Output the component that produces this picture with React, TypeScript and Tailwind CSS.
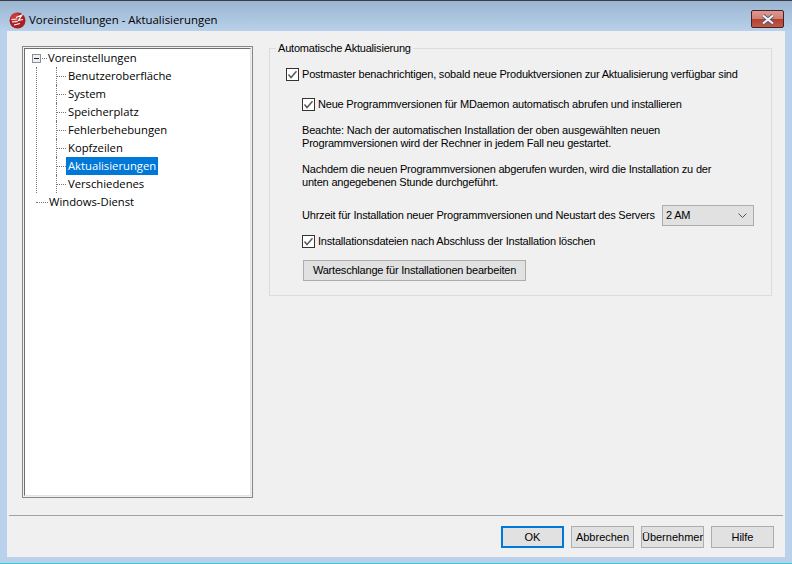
const treeItems = [
  "Benutzeroberfläche",
  "System",
  "Speicherplatz",
  "Fehlerbehebungen",
  "Kopfzeilen",
  "Aktualisierungen",
  "Verschiedenes",
];

const Checkbox = ({ className = "" }: { className?: string }) => (
  <svg width="13" height="13" viewBox="0 0 13 13" className={`shrink-0 ${className}`}>
    <rect x="0.5" y="0.5" width="12" height="12" fill="#fff" stroke="#333" />
    <path d="M2.5 6.5 L5 9.5 L10.5 3.2" fill="none" stroke="#5a5a5a" strokeWidth="1.5" />
  </svg>
);

const AppLogo = () => (
  <svg width="17" height="17" viewBox="0 0 17 17" className="shrink-0">
    <circle cx="8.5" cy="8.5" r="8" fill="#a81f24" />
    <circle cx="6.5" cy="6" r="5" fill="#d8504d" opacity="0.6" />
    <path d="M2.5 7.5 L8 7 M3 10 L8.5 9.5 M5 13 L11 11.5 M7 5.5 L13 3 L9.5 8.5 L14 7.5" stroke="#fff" strokeWidth="1.1" fill="none" />
  </svg>
);

const FooterButton = ({ label, active = false }: { label: string; active?: boolean }) => (
  <button
    className={`w-[63px] h-[22px] bg-[#e1e1e1] text-[11px] leading-none text-black flex items-center justify-center whitespace-nowrap ${active ? "border-2 border-[#0078d7]" : "border border-[#adadad]"}`}
  >
    {label}
  </button>
);

export default function App() {
  return (
    <div className="w-[792px] h-[564px] bg-[#b9d1ea] flex flex-col overflow-hidden border-b border-[#2ecbe0] font-['Liberation_Sans',sans-serif]">
      <div className="h-[31px] shrink-0 flex bg-gradient-to-b from-[#9bb5d1] to-[#b9d1ea] border-t border-[#3b3f44]">
        <div className="flex items-center gap-[3px] pl-[9px] h-[38px] -mb-[8px] text-[11.4px] text-black font-['Open_Sans',sans-serif]">
          <AppLogo />
          <span>Voreinstellungen - Aktualisierungen</span>
        </div>
        <div className="ml-auto mr-[8px] mt-[9px] w-[33px] h-[18px] rounded-[2px] border border-[#4a1f2c] bg-[linear-gradient(#dd9a90_0%,#cf7f74_50%,#b5402f_52%,#bf5a48_100%)] flex items-center justify-center">
          <svg width="14" height="11" viewBox="0 0 14 11">
            <path d="M2 1.5 L12 9.5 M12 1.5 L2 9.5" stroke="#4d5470" strokeWidth="3.6" />
            <path d="M2 1.5 L12 9.5 M12 1.5 L2 9.5" stroke="#f2f4f8" strokeWidth="2.2" />
          </svg>
        </div>
      </div>

      <div className="h-[526px] mx-[7px] bg-[#f0f0f0] flex flex-col">
        <div className="h-[484px] flex pt-[15px] pl-[15px] pr-[12px]">
          <div className="w-[231px] h-[452px] border border-[#85858a] p-px">
            <div className="w-full h-full bg-white border border-[#6e6e6e] border-r-[#e3e3e3] border-b-[#e3e3e3] text-[11.25px] text-black font-['Open_Sans',sans-serif]">
              <div className="h-[18px] flex items-center relative">
                <span className="absolute left-[7px] top-[5px] w-[9px] h-[9px] border border-[#8a8f99] bg-[#eef0f4] flex items-center justify-center">
                  <span className="w-[5px] h-px bg-[#222]"></span>
                </span>
                <span className="ml-[17px] w-[5px] border-t border-dotted border-[#777]"></span>
                <span className="ml-[1px]">Voreinstellungen</span>
              </div>
              <div className="ml-[11px] border-l border-dotted border-[#777]">
                <div className="-mb-[9px]">
                  {treeItems.map((item) => (
                    <div key={item} className="h-[18px] flex items-center pl-[19px] relative">
                      <span className="absolute left-[19px] top-0 h-[18px] border-l border-dotted border-[#777]"></span>
                      <span className="w-[10px] border-t border-dotted border-[#777]"></span>
                      <span className={`px-[2px] h-[18px] flex items-center ${item === "Aktualisierungen" ? "bg-[#0078d7] text-white" : ""}`}>
                        {item}
                      </span>
                    </div>
                  ))}
                </div>
                <div className="h-[9px]"></div>
              </div>
              <div className="h-[18px] flex items-center ml-[11px]">
                <span className="w-[12px] border-t border-dotted border-[#777]"></span>
                <span className="ml-[1px]">Windows-Dienst</span>
              </div>
            </div>
          </div>

          <div className="ml-[16px] mt-[2px] w-[503px] h-[248px] border border-[#dcdcdc] relative pl-[16px] pt-[18px] text-[11px] tracking-[-0.2px] leading-[13px] text-black">
            <span className="absolute left-[6px] -top-[7px] bg-[#f0f0f0] px-[2px]">Automatische Aktualisierung</span>
            <div className="flex items-center gap-[3px] h-[15px]">
              <Checkbox />
              <span className="whitespace-nowrap">Postmaster benachrichtigen, sobald neue Produktversionen zur Aktualisierung verfügbar sind</span>
            </div>
            <div className="flex items-center gap-[3px] h-[15px] mt-[15px] ml-[16px]">
              <Checkbox />
              <span className="whitespace-nowrap">Neue Programmversionen für MDaemon automatisch abrufen und installieren</span>
            </div>
            <p className="ml-[16px] mt-[12px]">
              Beachte: Nach der automatischen Installation der oben ausgewählten neuen<br />
              Programmversionen wird der Rechner in jedem Fall neu gestartet.
            </p>
            <p className="ml-[16px] mt-[13px]">
              Nachdem die neuen Programmversionen abgerufen wurden, wird die Installation zu der<br />
              unten angegebenen Stunde durchgeführt.
            </p>
            <div className="flex items-center ml-[16px] mt-[16px] h-[21px]">
              <span className="w-[360px] whitespace-nowrap">Uhrzeit für Installation neuer Programmversionen und Neustart des Servers</span>
              <div className="w-[92px] h-[21px] bg-[#e1e1e1] border border-[#adadad] flex items-center pl-[3px] pr-[6px]">
                <span>2 AM</span>
                <svg width="9" height="5" viewBox="0 0 9 5" className="ml-auto">
                  <path d="M0.5 0.5 L4.5 4.5 L8.5 0.5" fill="none" stroke="#555" />
                </svg>
              </div>
            </div>
            <div className="flex items-center gap-[3px] h-[15px] mt-[8px] ml-[16px]">
              <Checkbox />
              <span className="whitespace-nowrap">Installationsdateien nach Abschluss der Installation löschen</span>
            </div>
            <button className="ml-[17px] mt-[11px] w-[223px] h-[21px] bg-[#e1e1e1] border border-[#adadad] flex items-center justify-center whitespace-nowrap">
              Warteschlange für Installationen bearbeiten
            </button>
          </div>
        </div>

        <div className="mx-[2px] h-px bg-[#a0a0a0]"></div>

        <div className="flex justify-end gap-[7px] pt-[10px] pr-[11px]">
          <FooterButton label="OK" active />
          <FooterButton label="Abbrechen" />
          <FooterButton label="Übernehmer" />
          <FooterButton label="Hilfe" />
        </div>
      </div>
    </div>
  );
}
